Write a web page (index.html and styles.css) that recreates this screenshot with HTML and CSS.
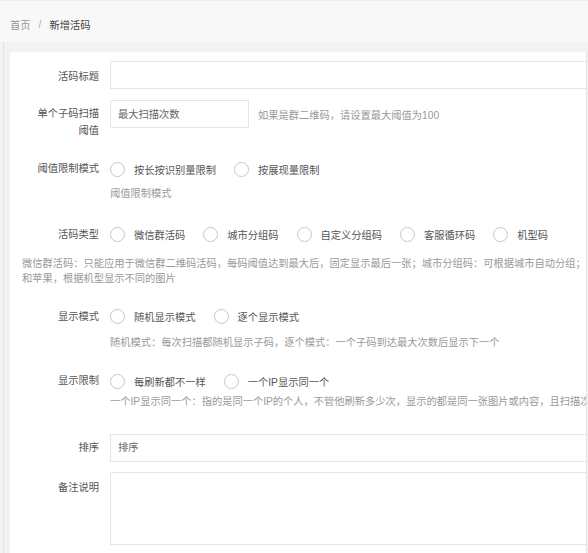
FILE: index.html
```html
<!DOCTYPE html>
<html lang="zh-CN">
<head>
<meta charset="utf-8">
<title>新增活码</title>
<link rel="stylesheet" href="styles.css">
</head>
<body>
<div class="header">
  <span class="crumb-link">首页</span><span class="crumb-sep">/</span><span class="crumb-cur">新增活码</span>
</div>
<div class="main">
  <div class="card">
    <form class="form">
      <div class="item row-title">
        <label class="label label-input">活码标题</label>
        <div class="field"><input class="input input-full" type="text"></div>
      </div>

      <div class="item row-limit">
        <label class="label label-two">单个子码扫描阈值</label>
        <div class="field field-inline">
          <input class="input input-short" type="text" placeholder="最大扫描次数">
          <span class="aside">如果是群二维码，请设置最大阈值为100</span>
        </div>
      </div>

      <div class="item row-mode">
        <label class="label label-line">阈值限制模式</label>
        <div class="field">
          <div class="radios">
            <span class="radio"><i class="radio-icon"></i>按长按识别量限制</span>
            <span class="radio"><i class="radio-icon"></i>按展现量限制</span>
          </div>
          <div class="hint hint-mode">阈值限制模式</div>
        </div>
      </div>

      <div class="item row-type">
        <label class="label label-line">活码类型</label>
        <div class="field">
          <div class="radios">
            <span class="radio"><i class="radio-icon"></i>微信群活码</span>
            <span class="radio"><i class="radio-icon"></i>城市分组码</span>
            <span class="radio"><i class="radio-icon"></i>自定义分组码</span>
            <span class="radio"><i class="radio-icon"></i>客服循环码</span>
            <span class="radio"><i class="radio-icon"></i>机型码</span>
          </div>
        </div>
      </div>
      <div class="desc">微信群活码：只能应用于微信群二维码活码，每码阈值达到最大后，固定显示最后一张；城市分组码：可根据城市自动分组；机型码：可区分安卓<br>和苹果，根据机型显示不同的图片</div>

      <div class="item row-show">
        <label class="label label-line">显示模式</label>
        <div class="field">
          <div class="radios">
            <span class="radio"><i class="radio-icon"></i>随机显示模式</span>
            <span class="radio"><i class="radio-icon"></i>逐个显示模式</span>
          </div>
          <div class="hint hint-show">随机模式：每次扫描都随机显示子码，逐个模式：一个子码到达最大次数后显示下一个</div>
        </div>
      </div>

      <div class="item row-ip">
        <label class="label label-line">显示限制</label>
        <div class="field">
          <div class="radios">
            <span class="radio"><i class="radio-icon"></i>每刷新都不一样</span>
            <span class="radio"><i class="radio-icon"></i>一个IP显示同一个</span>
          </div>
          <div class="hint hint-ip">一个IP显示同一个：指的是同一个IP的个人，不管他刷新多少次，显示的都是同一张图片或内容，且扫描次数只记录一次</div>
        </div>
      </div>

      <div class="item row-sort">
        <label class="label label-line">排序</label>
        <div class="field"><input class="input input-full" type="text" placeholder="排序"></div>
      </div>

      <div class="item row-note">
        <label class="label label-input">备注说明</label>
        <div class="field"><textarea class="textarea"></textarea></div>
      </div>
    </form>
  </div>
</div>
</body>
</html>
```

FILE: styles.css
```css
html, body {
  margin: 0;
  padding: 0;
}
body {
  width: 588px;
  height: 553px;
  overflow: hidden;
  background: #f2f2f2;
  font-family: "Liberation Sans", "Noto Sans CJK SC", sans-serif;
  font-size: 10.25px;
  color: #555;
}

.header {
  box-sizing: border-box;
  height: 42px;
  padding: 6px 0 0 10px;
  display: flex;
  align-items: center;
  background: #f8f8f8;
  border-top: 1px solid #efefef;
}
.crumb-link { color: #999; }
.crumb-sep { color: #aaa; margin: 0 8px 0 8px; }
.crumb-cur { color: #444; }

.main {
  margin-left: 3px;
  border-left: 1px solid #e2e2e2;
  padding: 10px 0 0 6px;
}

.card {
  box-sizing: border-box;
  width: 577px;
  height: 520px;
  background: #fff;
  border-right: 1px solid #e6e6e6;
  overflow: hidden;
  padding-top: 9px;
}

.item {
  display: flex;
  align-items: flex-start;
}
.label {
  flex: 0 0 100px;
  box-sizing: border-box;
  padding: 0 11px 0 25px;
  text-align: right;
  line-height: 17px;
  color: #555;
}
.label-input { padding-top: 6.5px; }
.label-two { padding-top: 4.5px; }
.label-line { line-height: 28px; }

.field {
  flex: 1;
  min-width: 0;
}
.field-inline {
  display: flex;
  align-items: center;
}

.input, .textarea {
  box-sizing: border-box;
  border: 1px solid #e6e6e6;
  background: #fff;
  font-family: inherit;
  font-size: 10.25px;
  color: #555;
  outline: none;
  margin: 0;
  display: block;
}
.input {
  height: 28px;
  padding: 0 7px;
}
.input::placeholder { color: #666; }
.input-full { width: 520px; }
.input-short { width: 139px; flex: 0 0 139px; }
.textarea {
  width: 520px;
  height: 73px;
  resize: none;
}
.aside {
  margin-left: 9px;
  color: #999;
  white-space: nowrap;
}

.radios {
  display: flex;
  align-items: center;
  height: 28px;
  white-space: nowrap;
}
.radio {
  display: inline-flex;
  align-items: center;
  margin-right: 18px;
  color: #555;
}
.radio-icon {
  box-sizing: border-box;
  width: 15px;
  height: 15px;
  border: 1px solid #c6c6c6;
  border-radius: 50%;
  background: #fff;
  margin-right: 9px;
}

.hint {
  color: #999;
  line-height: 17px;
  white-space: nowrap;
}
.hint-mode { margin-top: 1.5px; }
.hint-show { margin-top: 3.5px; }
.hint-ip { margin-top: -2px; }

.desc {
  margin-top: 7.5px;
  padding-left: 12px;
  line-height: 15px;
  color: #999;
  white-space: nowrap;
}

.row-limit { margin-top: 11px; }
.row-mode { margin-top: 16.5px; }
.row-type { margin-top: 19px; }
.row-show { margin-top: 16.5px; }
.row-ip { margin-top: 16px; }
.row-sort { margin-top: 23.5px; }
.row-note { margin-top: 10.5px; }
```
